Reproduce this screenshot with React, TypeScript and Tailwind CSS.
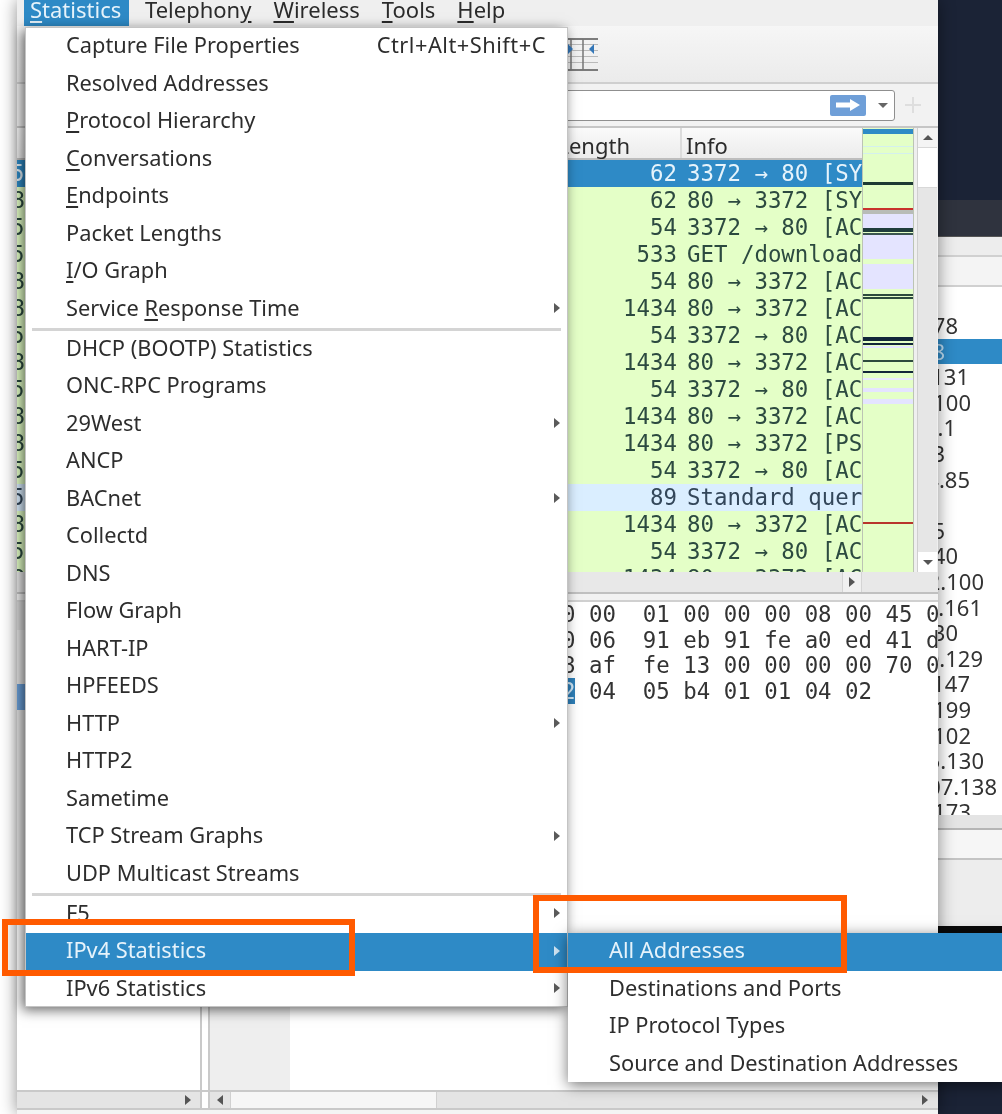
const menuItems = [
  { label: 'Capture File Properties', shortcut: 'Ctrl+Alt+Shift+C' },
  { label: 'Resolved Addresses' },
  { label: 'Protocol Hierarchy', u: 0 },
  { label: 'Conversations', u: 0 },
  { label: 'Endpoints', u: 0 },
  { label: 'Packet Lengths' },
  { label: 'I/O Graph', u: 0 },
  { label: 'Service Response Time', u: 8, sub: true },
  { sep: true },
  { label: 'DHCP (BOOTP) Statistics' },
  { label: 'ONC-RPC Programs' },
  { label: '29West', sub: true },
  { label: 'ANCP' },
  { label: 'BACnet', sub: true },
  { label: 'Collectd' },
  { label: 'DNS' },
  { label: 'Flow Graph' },
  { label: 'HART-IP' },
  { label: 'HPFEEDS' },
  { label: 'HTTP', sub: true },
  { label: 'HTTP2' },
  { label: 'Sametime' },
  { label: 'TCP Stream Graphs', sub: true },
  { label: 'UDP Multicast Streams' },
  { sep: true },
  { label: 'F5', sub: true },
  { label: 'IPv4 Statistics', sub: true, active: true },
  { label: 'IPv6 Statistics', sub: true },
]

const subItems = ['All Addresses', 'Destinations and Ports', 'IP Protocol Types', 'Source and Destination Addresses']

const packets = [
  { side: '50', len: '62', info: '3372 → 80 [SYN] Seq=0', selected: true },
  { side: '8', len: '62', info: '80 → 3372 [SYN, ACK]' },
  { side: '50', len: '54', info: '3372 → 80 [ACK] Seq=1' },
  { side: '50', len: '533', info: 'GET /download.html' },
  { side: '8', len: '54', info: '80 → 3372 [ACK] Seq=1' },
  { side: '8', len: '1434', info: '80 → 3372 [ACK] Seq=1' },
  { side: '50', len: '54', info: '3372 → 80 [ACK] Seq=4' },
  { side: '8', len: '1434', info: '80 → 3372 [ACK] Seq=2' },
  { side: '50', len: '54', info: '3372 → 80 [ACK] Seq=4' },
  { side: '8', len: '1434', info: '80 → 3372 [ACK] Seq=3' },
  { side: '8', len: '1434', info: '80 → 3372 [PSH, ACK]' },
  { side: '50', len: '54', info: '3372 → 80 [ACK] Seq=4' },
  { side: '50', len: '89', info: 'Standard query 0x0023', dns: true },
  { side: '8', len: '1434', info: '80 → 3372 [ACK] Seq=5' },
  { side: '50', len: '54', info: '3372 → 80 [ACK] Seq=4' },
  { side: '8', len: '1434', info: '80 → 3372 [ACK] Seq=6' },
]

const stripes = [
  [0, 5, '#2e8ac6'], [17, 1, '#d4f0ee'], [24, 1, '#d4f0ee'], [53, 3, '#1d3a33'], [79, 2, '#c8322c'],
  [81, 4, '#b8bcb8'], [85, 14, '#e4e4ff'], [99, 4, '#1f3d3c'], [104, 2, '#3a5550'], [106, 24, '#e4e4ff'],
  [135, 25, '#e4e4ff'], [165, 2, '#2d4a3e'], [168, 2, '#2d4a3e'], [208, 4, '#12263a'], [214, 2, '#12263a'],
  [217, 2, '#e4e4ff'], [231, 2, '#2d4a3e'], [242, 2, '#12263a'], [249, 2, '#e8e8ff'], [259, 4, '#e4e4ff'],
  [270, 5, '#e4e4ff'], [393, 2, '#b8352c'],
] as const

const hexRows = [
  '00 00  01 00 00 00 08 00 45 00',
  '40 06  91 eb 91 fe a0 ed 41 d4',
  'c8 af  fe 13 00 00 00 00 70 02',
]

const sideList = [
  { text: '192.168.0.78', cls: 'pr-[44px]' },
  { text: '192.168.0.8', cls: 'pr-[57px]', selected: true },
  { text: '192.168.0.131', cls: 'pr-[33px]' },
  { text: '192.168.0.100', cls: 'pr-[31px]' },
  { text: '216.58.6.1', cls: 'pr-[46px]' },
  { text: '10.0.0.3', cls: 'pr-[57px]' },
  { text: '172.217.4.85', cls: 'pr-[32px]' },
  { text: '', cls: '' },
  { text: '10.0.0.5', cls: 'pr-[57px]' },
  { text: '10.0.0.40', cls: 'pr-[44px]' },
  { text: '192.168.2.100', cls: 'pr-[18px]' },
  { text: '172.16.0.161', cls: 'pr-[20px]' },
  { text: '10.0.0.30', cls: 'pr-[44px]' },
  { text: '172.16.0.129', cls: 'pr-[19px]' },
  { text: '192.168.0.147', cls: 'pr-[32px]' },
  { text: '192.168.0.199', cls: 'pr-[31px]' },
  { text: '192.168.0.102', cls: 'pr-[31px]' },
  { text: '172.16.5.130', cls: 'pr-[18px]' },
  { text: '10.10.107.138', cls: 'pr-[5px]' },
  { text: '192.168.0.173', cls: 'pr-[31px]' },
]

function Label({ text, u }: { text: string; u?: number }) {
  if (u === undefined) return <span>{text}</span>
  return (
    <span>
      {text.slice(0, u)}
      <span className="underline underline-offset-[3px]">{text[u]}</span>
      {text.slice(u + 1)}
    </span>
  )
}

function Arrow({ dir, color = '#555555' }: { dir: 'left' | 'right' | 'up' | 'down'; color?: string }) {
  const points = {
    right: '3,1 9,6 3,11',
    left: '9,1 3,6 9,11',
    up: '1,8 6,3 11,8',
    down: '1,4 6,9 11,4',
  }
  return (
    <svg width="12" height="12" viewBox="0 0 12 12" className="shrink-0">
      <polygon points={points[dir]} fill={color} />
    </svg>
  )
}

function Toolbar() {
  return (
    <div className="h-[58px] flex justify-end items-start pr-[340px] pt-[12px] bg-gradient-to-b from-[#f6f6f6] to-[#ebebeb] border-b-2 border-[#cfcfcf]">
      <svg width="30" height="34" viewBox="0 0 30 34">
        <g stroke="#b9b9b9" strokeWidth="1">
          <path d="M0 6.5h30M0 12.5h30M0 18.5h30M0 24.5h30" />
        </g>
        <path d="M0 1h30M0 32h30" stroke="#555" strokeWidth="1.5" />
        <path d="M3 1v31M15 1v31M27 1v0" stroke="#777" strokeWidth="1.5" />
        <path d="M0 6l5 5-5 5zM21 11l5-5v10z" fill="#3477b8" />
      </svg>
    </div>
  )
}

function FilterBar() {
  return (
    <div className="h-[44px] flex justify-end items-center gap-[9px] pr-[16px] bg-[#f2f2f2] border-b-2 border-[#c6c6c6]">
      <div className="w-[520px] h-[31px] flex items-center justify-end gap-[11px] pr-[5px] bg-white border border-[#8f8f8f] rounded-[3px]">
        <div className="w-[36px] h-[21px] rounded-[2px] bg-[#6f9fd8] flex items-center justify-center">
          <svg width="26" height="14" viewBox="0 0 26 14">
            <path d="M1 4.5h14V1l10 6-10 6V9.5H1z" fill="#ffffff" />
          </svg>
        </div>
        <Arrow dir="down" color="#666666" />
      </div>
      <svg width="18" height="18" viewBox="0 0 18 18">
        <path d="M9 1v16M1 9h16" stroke="#dedede" strokeWidth="2" />
      </svg>
    </div>
  )
}

function PacketPane() {
  return (
    <div className="h-[444px] flex">
      <div className="w-[845px] flex flex-col overflow-hidden">
        <div className="h-[32px] shrink-0 flex bg-gradient-to-b from-[#fafafa] to-[#ececec] border-b-2 border-[#bdbdbd] text-[#2b2b2b] text-[22px] leading-[35px]">
          <div className="w-[665px] h-full flex justify-end pr-[50px] border-r-2 border-[#dcdcdc]">Length</div>
          <div className="pl-[4px]">Info</div>
        </div>
        <div className="h-[412px] overflow-hidden font-['DejaVu_Sans_Mono',monospace] text-[22.4px] leading-[27px]">
          {packets.map((p, i) => (
            <div
              key={i}
              className={
                'h-[27px] flex whitespace-pre ' +
                (p.selected
                  ? 'bg-[#2e8ac6] text-[#e6f3fb]'
                  : p.dns
                    ? 'bg-[#daeeff] text-[#33475a]'
                    : 'bg-[#e4ffc7] text-[#2c4a40]')
              }
            >
              <div className="w-[8px] shrink-0 overflow-hidden text-right">
                <span className="ml-[-6px] block">{p.side}</span>
              </div>
              <div className="w-[652px] shrink-0 text-right">{p.len}</div>
              <div className="pl-[10px]">{p.info}</div>
            </div>
          ))}
        </div>
      </div>
      <svg
        width="52"
        height="444"
        viewBox="0 -1 52 444"
        preserveAspectRatio="none"
        className="shrink-0 bg-[#e4ffc7] border-x border-[#bcc4b4]"
      >
        {stripes.map(([y, h, c], i) => (
          <rect key={i} x="0" y={y} width="52" height={h} fill={c} />
        ))}
      </svg>
      <div className="flex-1 ml-[3px] flex flex-col border-l border-[#cfcfcf] bg-[#e6e6e6] mr-[1px]">
        <div className="h-[20px] flex items-center justify-center bg-[#f4f4f4] border-b border-[#d8d8d8]">
          <Arrow dir="up" />
        </div>
        <div className="h-[40px] bg-white border-b border-[#d8d8d8]" />
        <div className="flex-1" />
        <div className="h-[20px] flex items-center justify-center bg-white">
          <Arrow dir="down" />
        </div>
      </div>
    </div>
  )
}

function HexPane() {
  return (
    <div className="h-[318px] flex bg-white">
      <div className="w-[8px] shrink-0 flex flex-col">
        <div className="h-[28px] bg-[#d6d6d6]" />
        <div className="h-[54px] bg-[#e2e2e2]" />
        <div className="h-[26px] bg-[#6a9fd8]" />
        <div className="flex-1 bg-[#e2e2e2]" />
      </div>
      <div className="flex-1 overflow-hidden pl-[523.5px] font-['DejaVu_Sans_Mono',monospace] text-[22.4px] leading-[25.6px] text-[#333333] whitespace-pre">
        {hexRows.map((r) => (
          <div key={r} className="h-[25.6px]">{r}</div>
        ))}
        <div className="h-[25.6px]">
          <span className="bg-[#2e7fb8] text-[#cfe6f5]">02</span> 04  05 b4 01 01 04 02
        </div>
      </div>
    </div>
  )
}

function BottomPane() {
  return (
    <div className="flex-1 flex flex-col">
      <div className="flex-1 flex bg-white">
        <div className="w-[185px] border-r-2 border-[#c9c9c9]" />
        <div className="w-[6px] bg-white" />
        <div className="w-[82px] border-l-2 border-[#c9c9c9] bg-[#eeeeee]" />
        <div className="flex-1" />
      </div>
      <div className="h-[20px] flex border-y-2 border-[#c9c9c9]">
        <div className="w-[185px] flex justify-end items-center pr-[6px] bg-[#e4e4e4] border-r-2 border-[#c9c9c9]">
          <Arrow dir="right" />
        </div>
        <div className="w-[6px] bg-white" />
        <div className="flex-1 flex items-center bg-[#e4e4e4] border-l-2 border-[#c9c9c9]">
          <div className="w-[20px] flex justify-center">
            <Arrow dir="left" />
          </div>
          <div className="w-[207px] h-full bg-[#f6f6f6] border-x border-[#d0d0d0]" />
          <div className="flex-1" />
          <div className="w-[20px] flex justify-center mr-[3px]">
            <Arrow dir="right" />
          </div>
        </div>
      </div>
      <div className="h-[4px] bg-[#f4f4f4]" />
    </div>
  )
}

function RightColumn() {
  return (
    <div className="w-[64px] shrink-0 flex flex-col">
      <div className="h-[200px] bg-[#1b2336]" />
      <div className="h-[37px] bg-[#2f333e] border-b border-[#555555]" />
      <div className="h-[18px] bg-[#ededed]" />
      <div className="h-[32px] bg-[#f4f4f4] border-y-2 border-[#d0d0d0]" />
      <div className="h-[528px] bg-white overflow-hidden pt-[26px] text-[22px] leading-[25.6px] text-[#333333]">
        {sideList.map((row, i) => (
          <div
            key={i}
            className={
              'h-[25.6px] flex justify-end whitespace-nowrap ' +
              row.cls +
              (row.selected ? ' bg-[#2e8ac6] text-[#bcdcf2]' : '')
            }
          >
            <span className="shrink-0">{row.text}</span>
          </div>
        ))}
      </div>
      <div className="h-[15px] bg-[#e4e4e4] border-b-2 border-[#b5b5b5]" />
      <div className="h-[30px] bg-[#f6f6f6] border-b-2 border-[#c4c4c4]" />
      <div className="h-[66px] bg-[#ededed]" />
      <div className="h-[7px] bg-[#0a0a0a]" />
      <div className="flex-1 bg-[#1b2336]" />
    </div>
  )
}

function StatsMenu() {
  return (
    <div className="absolute left-[25px] top-[27px] w-[543px] h-[980px] z-10 bg-white border border-[#c4c4c4] text-[#2d2d2d] text-[21.8px] shadow-[-3px_3px_12px_rgba(0,0,0,0.6)]">
      {menuItems.map((item, i) =>
        item.sep ? (
          <div key={i} className="h-[2.5px] mx-[6px] bg-[#d4d4d4]" />
        ) : (
          <div
            key={i}
            className={
              'h-[37.5px] flex items-center justify-between pl-[40px] pr-[4px] pb-[2px] ' +
              (item.active ? 'bg-[#2e8ac6] text-[#e6f3fb]' : '')
            }
          >
            <Label text={item.label ?? ''} u={item.u} />
            {item.shortcut && <span className="mr-[17px] tracking-[0.5px]">{item.shortcut}</span>}
            {item.sub && <Arrow dir="right" color={item.active ? '#cfe4f3' : '#5a5a5a'} />}
          </div>
        ),
      )}
    </div>
  )
}

function AddressSubmenu() {
  return (
    <div className="absolute left-[568px] top-[933px] w-[440px] h-[149px] z-20 bg-white text-[#2d2d2d] text-[21.8px] shadow-[0_3px_14px_rgba(0,0,0,0.55)]">
      {subItems.map((label, i) => (
        <div
          key={label}
          className={'h-[37.5px] flex items-center pl-[41px] pb-[2px] ' + (i === 0 ? 'bg-[#2e8ac6] text-[#e6f3fb]' : '')}
        >
          {label}
        </div>
      ))}
    </div>
  )
}

export default function App() {
  return (
    <div className="relative w-[1002px] h-[1114px] flex overflow-hidden bg-white font-['Noto_Sans',sans-serif] text-[22px] blur-[0.4px]">
      <div className="w-[17px] shrink-0 bg-white" />

      <div className="w-[921px] shrink-0 h-[1114px] flex flex-col z-[1] bg-[#efefef] overflow-hidden shadow-[0_0_16px_rgba(0,0,0,0.45)]">
        <div className="h-[26px] flex items-center bg-[#efefef] text-[#2b2b2b] leading-[20px] pb-[8px]">
          <div className="w-[7px]" />
          <div className="h-[26px] mt-[8px] w-[105px] pl-[6px] bg-[#2e8ac6] text-[#e6f3fb] flex items-center pb-[8px]">
            <Label text="Statistics" u={0} />
          </div>
          <div className="flex pl-[16px] gap-[22px]">
            <Label text="Telephony" u={8} />
            <Label text="Wireless" u={0} />
            <Label text="Tools" u={0} />
            <Label text="Help" u={0} />
          </div>
        </div>
        <Toolbar />
        <FilterBar />
        <PacketPane />
        <div className="h-[22px] flex justify-end bg-[#e8e8e8] border-b-2 border-[#c0c0c0]">
          <div className="w-[20px] flex items-center justify-center bg-[#f0f0f0] border-x border-[#d4d4d4] mr-[76px]">
            <Arrow dir="right" />
          </div>
        </div>
        <div className="h-[8px] bg-[#f2f2f2] border-b-2 border-[#d0d0d0]" />
        <HexPane />
        <BottomPane />
      </div>

      <RightColumn />

      <StatsMenu />
      <AddressSubmenu />

      <div className="absolute left-[2px] top-[919px] w-[353px] h-[57px] z-30 border-[6px] border-[#ff5a00]" />
      <div className="absolute left-[533px] top-[895px] w-[314px] h-[78px] z-30 border-[6px] border-[#ff5a00]" />
    </div>
  )
}
